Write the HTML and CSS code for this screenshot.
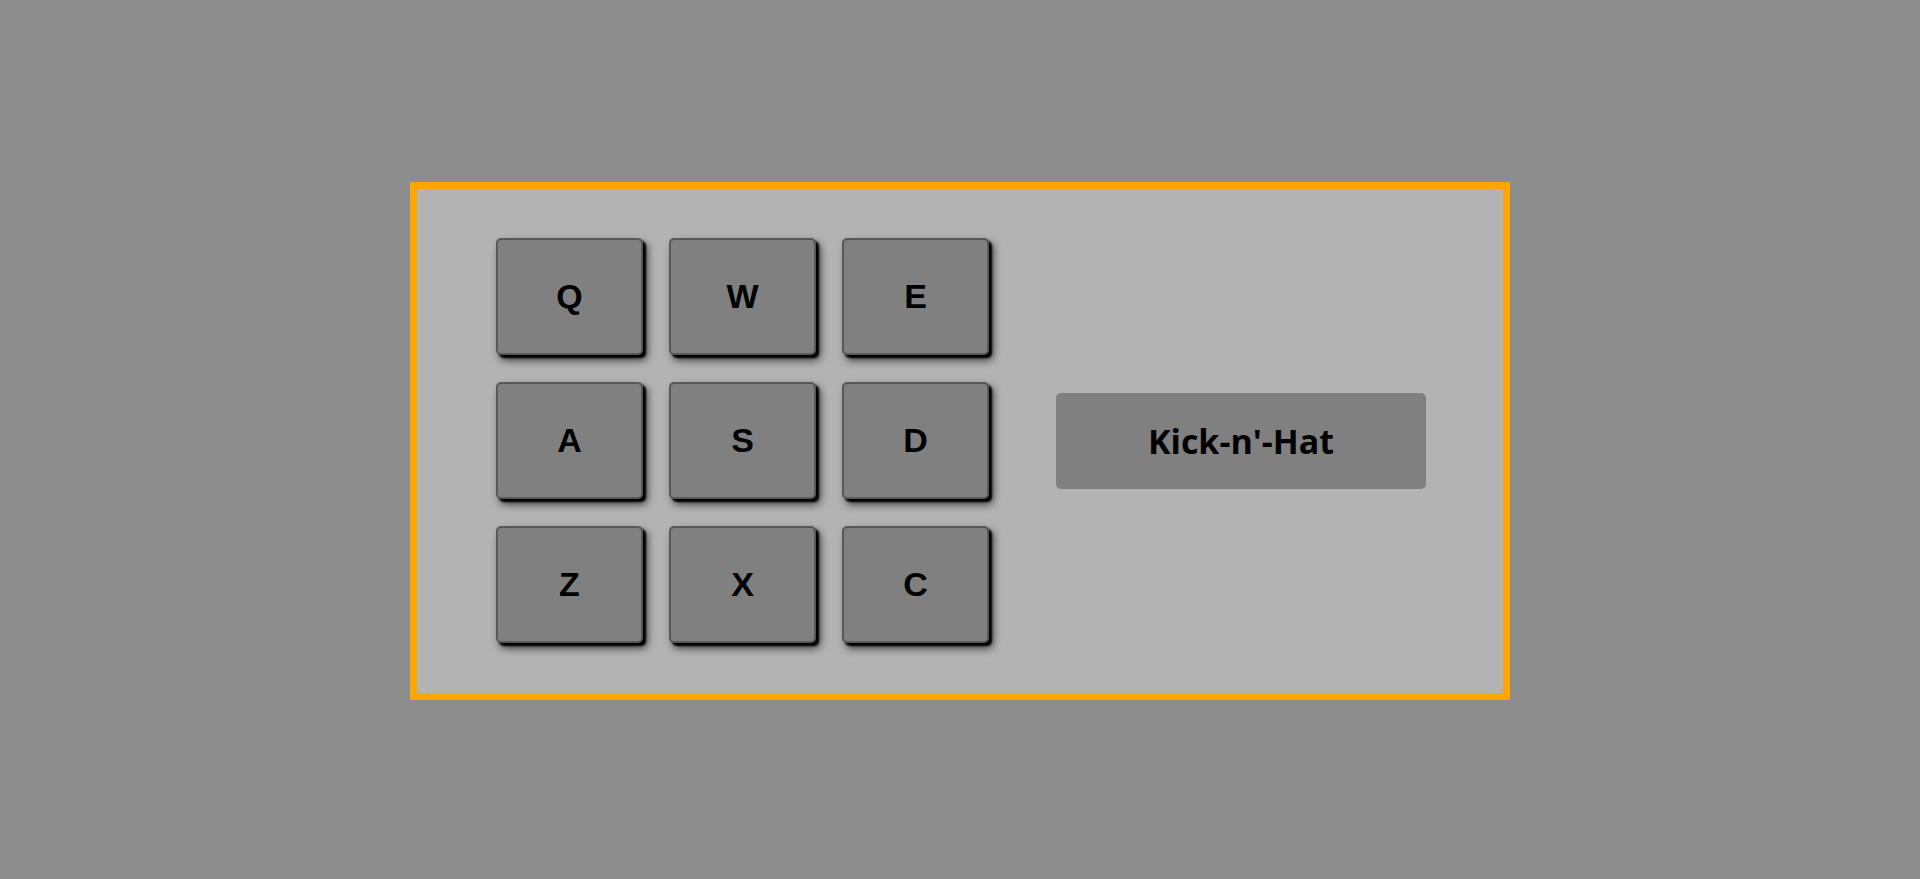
FILE: index.html
```html
<!DOCTYPE html>
<html>
<head>
<meta charset="utf-8">
<link rel="stylesheet" href="styles.css">
</head>
<body>
<div class="machine">
  <div class="pads">
    <div class="pad">Q</div>
    <div class="pad">W</div>
    <div class="pad">E</div>
    <div class="pad">A</div>
    <div class="pad">S</div>
    <div class="pad">D</div>
    <div class="pad">Z</div>
    <div class="pad">X</div>
    <div class="pad">C</div>
  </div>
  <div class="display">Kick-n'-Hat</div>
</div>
</body>
</html>
```

FILE: styles.css
```css
html, body {
  margin: 0;
  padding: 0;
}
body {
  background: #8d8d8d;
  height: 879px;
  overflow: hidden;
  padding-top: 182px;
  box-sizing: border-box;
}
.machine {
  width: 1100px;
  height: 518px;
  box-sizing: border-box;
  margin: 0 auto;
  border: 7px solid #ffa500;
  background: #b3b3b3;
  display: flex;
  align-items: center;
  padding: 0 77px 0 79px;
}
.pads {
  display: grid;
  grid-template-columns: repeat(3, 147px);
  grid-auto-rows: 117px;
  column-gap: 26px;
  row-gap: 27px;
  margin-top: -2px;
}
.pad {
  box-sizing: border-box;
  background: #808080;
  border: 2px solid #585858;
  border-radius: 5px;
  box-shadow: 3px 3px 2px #000, 4px 5px 8px rgba(0, 0, 0, 0.7);
  display: flex;
  align-items: center;
  justify-content: center;
  font-family: "Liberation Sans", Arial, sans-serif;
  font-weight: bold;
  font-size: 34px;
  color: #000;
}
.display {
  margin-left: 67px;
  width: 371px;
  height: 96px;
  background: #808080;
  border-radius: 5px;
  display: flex;
  align-items: center;
  justify-content: center;
  font-family: "Open Sans", "Noto Sans", sans-serif;
  font-weight: bold;
  font-size: 34px;
  color: #000;
}
```
